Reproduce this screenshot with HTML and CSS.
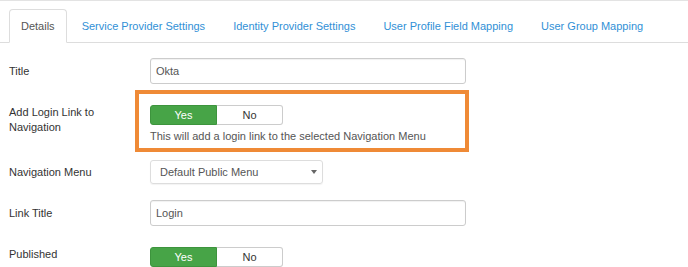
FILE: index.html
```html
<!DOCTYPE html>
<html lang="en">

<head>
  <meta charset="UTF-8">
  <meta name="viewport" content="width=device-width, initial-scale=1.0">
  <title>Okta - Details</title>
  <link rel="stylesheet" href="styles.css">
</head>

<body>
  <ul class="nav-tabs">
    <li class="active"><a href="#details">Details</a></li>
    <li><a href="#sp">Service Provider Settings</a></li>
    <li><a href="#idp">Identity Provider Settings</a></li>
    <li><a href="#profile">User Profile Field Mapping</a></li>
    <li><a href="#groups">User Group Mapping</a></li>
  </ul>

  <form class="form">
    <div class="row row-title">
      <label class="control-label">Title</label>
      <div class="controls">
        <input class="input" type="text" value="Okta">
      </div>
    </div>

    <div class="row row-login">
      <label class="control-label">Add Login Link to Navigation</label>
      <div class="controls highlight">
        <div class="btn-group">
          <span class="btn btn-yes">Yes</span>
          <span class="btn">No</span>
        </div>
        <p class="help">This will add a login link to the selected Navigation Menu</p>
      </div>
    </div>

    <div class="row row-menu">
      <label class="control-label">Navigation Menu</label>
      <div class="controls">
        <div class="select">
          <span>Default Public Menu</span>
          <svg class="caret" width="6" height="4" viewBox="0 0 6 4"><path d="M0 0h6L3 4z" fill="#666"/></svg>
        </div>
      </div>
    </div>

    <div class="row row-link">
      <label class="control-label">Link Title</label>
      <div class="controls">
        <input class="input" type="text" value="Login">
      </div>
    </div>

    <div class="row row-published">
      <label class="control-label">Published</label>
      <div class="controls">
        <div class="btn-group">
          <span class="btn btn-yes">Yes</span>
          <span class="btn">No</span>
        </div>
      </div>
    </div>
  </form>
</body>

</html>
```

FILE: styles.css
```css
html {
  background: #fff;
}

body {
  margin: 0;
  border-top: 1px solid #e3e3e3;
  font-family: "Liberation Sans", Arial, sans-serif;
  font-size: 11px;
  color: #333;
  overflow: hidden;
}

/* tabs */
.nav-tabs {
  display: flex;
  list-style: none;
  margin: 0;
  padding: 8px 9px 0;
  border-bottom: 1px solid #ddd;
}

.nav-tabs li {
  margin: 0 2px -1px 0;
}

.nav-tabs a {
  display: block;
  padding: 8px 12px;
  line-height: 16px;
  border: 1px solid transparent;
  border-radius: 4px 4px 0 0;
  color: #3190d6;
  text-decoration: none;
}

.nav-tabs .active a {
  padding: 8px 11px;
  color: #555;
  background: #fff;
  border-color: #ddd #ddd transparent;
}

/* form rows */
.form {
  padding: 15px 0 0 9px;
}

.row {
  display: grid;
  grid-template-columns: 141px auto;
  align-items: start;
}

.control-label {
  line-height: 15px;
  padding-right: 20px;
}

.row-title {
  margin-bottom: 6px;
}

.row-title .control-label,
.row-link .control-label {
  line-height: 26px;
}

.row-login .control-label {
  padding-top: 15px;
}

.row-login {
  margin-bottom: 8px;
}

.row-menu {
  margin-bottom: 16px;
}

.row-menu .control-label {
  line-height: 24px;
}

.row-link {
  margin-bottom: 21px;
}

.input {
  box-sizing: border-box;
  display: block;
  width: 316px;
  height: 26px;
  margin: 0;
  padding: 0 5px;
  border: 1px solid #ccc;
  border-radius: 3px;
  box-shadow: inset 0 1px 1px rgba(0, 0, 0, 0.06);
  font: inherit;
  color: #555;
}

/* highlighted control */
.highlight {
  box-sizing: border-box;
  width: 334px;
  margin-left: -15px;
  padding: 11px 11px 4px;
  border: 4px solid #ef8a36;
}

.help {
  margin: 4px 0 0;
  line-height: 15px;
  color: #555;
}

/* yes / no toggle */
.btn-group {
  display: flex;
}

.btn {
  box-sizing: border-box;
  width: 66px;
  height: 20px;
  line-height: 18px;
  text-align: center;
  border: 1px solid #ccc;
  background: #fff;
  color: #333;
}

.btn:first-child {
  width: 67px;
  border-radius: 3px 0 0 3px;
}

.btn:last-child {
  border-left: 0;
  border-radius: 0 3px 3px 0;
}

.btn-yes {
  background: #47a447;
  border-color: #3d943d;
  color: #fff;
}

/* select */
.select {
  box-sizing: border-box;
  display: flex;
  align-items: center;
  justify-content: space-between;
  width: 173px;
  height: 24px;
  padding: 0 5px 0 9px;
  border: 1px solid #ddd;
  border-radius: 3px;
  box-shadow: 0 1px 1px rgba(0, 0, 0, 0.05);
  color: #555;
}
```
